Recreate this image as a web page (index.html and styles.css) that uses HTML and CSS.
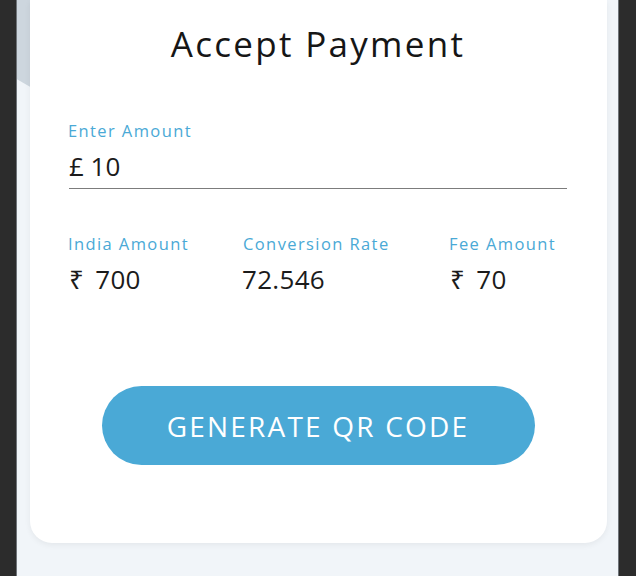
FILE: index.html
```html
<!DOCTYPE html>
<html>
<head>
<meta charset="utf-8">
<link rel="stylesheet" href="styles.css">
</head>
<body>
<div class="frame">
  <div class="screen">
    <div class="blob"></div>
    <div class="card">
      <h1 class="title">Accept Payment</h1>
      <div class="field">
        <div class="label">Enter Amount</div>
        <div class="input">£ 10</div>
      </div>
      <div class="stats">
        <div class="stat">
          <div class="label">India Amount</div>
          <div class="value"><span class="cur">₹</span> 700</div>
        </div>
        <div class="stat">
          <div class="label">Conversion Rate</div>
          <div class="value">72.546</div>
        </div>
        <div class="stat">
          <div class="label">Fee Amount</div>
          <div class="value"><span class="cur">₹</span> 70</div>
        </div>
      </div>
      <div class="actions">
        <button class="btn">GENERATE QR CODE</button>
      </div>
    </div>
  </div>
</div>
</body>
</html>
```
FILE: styles.css
```css
html, body {
  margin: 0;
  padding: 0;
  height: 576px;
  overflow: hidden;
  background: #2c2c2c;
  font-family: "Open Sans", "Noto Sans", sans-serif;
}
.frame {
  display: flex;
  padding-left: 16px;
  padding-right: 17px;
  height: 576px;
}
.screen {
  position: relative;
  flex: 1;
  background: #f1f5f9;
  border-left: 1px solid #6f7479;
  border-right: 1px solid #6f7479;
  overflow: hidden;
  padding: 0 11px 0 13px;
}
.blob {
  position: absolute;
  left: -92px;
  top: -289px;
  width: 400px;
  height: 400px;
  border-radius: 50%;
  background: #cdd6de;
}
.card {
  position: relative;
  background: #fff;
  border-radius: 0 0 22px 22px;
  box-shadow: 0 2px 6px rgba(0, 0, 0, 0.06);
  padding: 24px 40px 78px 39px;
  display: flex;
  flex-direction: column;
}
.title {
  margin: 0;
  font-weight: 400;
  font-size: 35px;
  line-height: 40px;
  letter-spacing: 2.3px;
  text-align: center;
  color: #161616;
}
.field {
  margin-top: 57px;
  border-bottom: 1px solid #7c7c7c;
  padding-bottom: 7px;
}
.label {
  font-size: 16.5px;
  line-height: 20px;
  letter-spacing: 1.4px;
  color: #4aa9d6;
  margin-left: -1px;
}
.input, .value {
  font-size: 26px;
  line-height: 30px;
  color: #1b1b1b;
}
.input {
  margin-top: 10px;
}
.value {
  margin-top: 10px;
  margin-left: -2px;
  letter-spacing: 0.3px;
}
.cur {
  display: inline-block;
  margin-left: 2px;
  margin-right: 4px;
}
.stats {
  margin-top: 45px;
  display: grid;
  grid-template-columns: 175px 206px 1fr;
}
.actions {
  margin-top: 92px;
  display: flex;
  justify-content: center;
}
.btn {
  width: 433px;
  height: 79px;
  border: none;
  border-radius: 40px;
  background: #4aa9d6;
  color: #fff;
  font-family: inherit;
  font-size: 28px;
  font-weight: 400;
  letter-spacing: 2.2px;
  padding: 0;
}
```
